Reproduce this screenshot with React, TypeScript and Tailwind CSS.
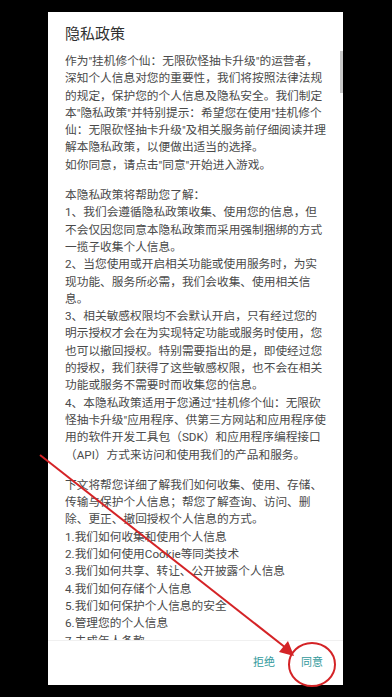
import React from "react";

const para1 = [
  '作为"挂机修个仙：无限砍怪抽卡升级"的运营者，',
  "深知个人信息对您的重要性，我们将按照法律法规",
  "的规定，保护您的个人信息及隐私安全。我们制定",
  '本"隐私政策"并特别提示：希望您在使用"挂机修个',
  '仙：无限砍怪抽卡升级"及相关服务前仔细阅读并理',
  "解本隐私政策，以便做出适当的选择。",
  '如你同意，请点击"同意"开始进入游戏。',
];

const para2 = [
  "本隐私政策将帮助您了解：",
  "1、我们会遵循隐私政策收集、使用您的信息，但",
  "不会仅因您同意本隐私政策而采用强制捆绑的方式",
  "一揽子收集个人信息。",
  "2、当您使用或开启相关功能或使用服务时，为实",
  "现功能、服务所必需，我们会收集、使用相关信",
  "息。",
  "3、相关敏感权限均不会默认开启，只有经过您的",
  "明示授权才会在为实现特定功能或服务时使用，您",
  "也可以撤回授权。特别需要指出的是，即使经过您",
  "的授权，我们获得了这些敏感权限，也不会在相关",
  "功能或服务不需要时而收集您的信息。",
  '4、本隐私政策适用于您通过"挂机修个仙：无限砍',
  '怪抽卡升级"应用程序、供第三方网站和应用程序使',
  "用的软件开发工具包（SDK）和应用程序编程接口",
  "（API）方式来访问和使用我们的产品和服务。",
];

const para3 = [
  "下文将帮您详细了解我们如何收集、使用、存储、",
  "传输与保护个人信息；帮您了解查询、访问、删",
  "除、更正、撤回授权个人信息的方式。",
  "1.我们如何收集和使用个人信息",
  "2.我们如何使用Cookie等同类技术",
  "3.我们如何共享、转让、公开披露个人信息",
  "4.我们如何存储个人信息",
  "5.我们如何保护个人信息的安全",
  "6.管理您的个人信息",
  "7.未成年人条款",
];

function Para({ lines }: { lines: string[] }) {
  return (
    <div>
      {lines.map((l, i) => (
        <div key={i} className="whitespace-nowrap h-[17.3px] leading-[17.3px]">
          {l}
        </div>
      ))}
    </div>
  );
}

export default function App() {
  return (
    <div
      className="relative w-[392px] h-[697px] bg-black overflow-hidden"
      style={{ fontFamily: 'Roboto, "Noto Sans CJK SC", sans-serif' }}
    >
      <div className="pt-[12px] pl-[48px]">
        <div className="w-[295px] h-[673px] bg-white flex flex-col">
          <div className="pl-[17px] pt-[12px] h-[38px] text-[15px] leading-[20px] text-[#303030]">
            隐私政策
          </div>
          <div className="relative flex-1 overflow-hidden">
            <div className="pl-[17px] pt-[3px] text-[11.7px] text-[#4a4a4a] flex flex-col gap-[13px]">
              <Para lines={para1} />
              <Para lines={para2} />
              <Para lines={para3} />
            </div>
            <div className="absolute right-0 top-[1px] w-[3px] h-[42px] bg-[#c9c9c9]" />
          </div>
          <div className="h-[45px] shrink-0 border-t border-[#f0f0f0] flex items-center justify-end pr-[20px] gap-[26px] text-[11px] text-[#329a9c]">
            <span>拒绝</span>
            <span>同意</span>
          </div>
        </div>
      </div>
      <svg
        className="absolute inset-0 pointer-events-none"
        width="392"
        height="697"
        viewBox="0 0 392 697"
      >
        <line x1="40" y1="455" x2="286" y2="648" stroke="#d42326" strokeWidth="2" />
        <polygon points="294,656 279,652 288,641" fill="#d42326" />
        <ellipse cx="312" cy="664.5" rx="23" ry="21.5" fill="none" stroke="#d42326" strokeWidth="2" />
      </svg>
    </div>
  );
}
